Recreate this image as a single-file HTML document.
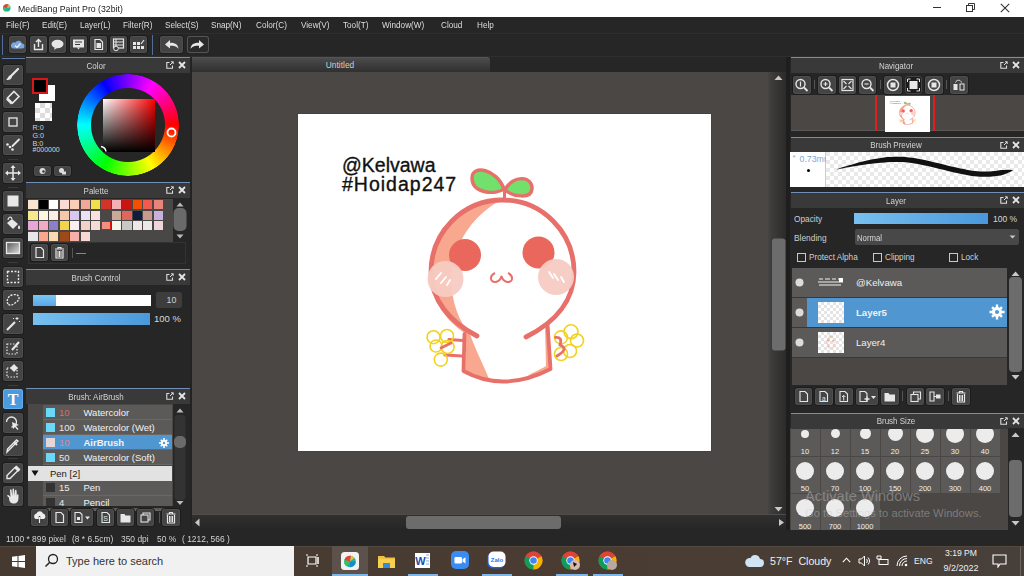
<!DOCTYPE html><html><head><meta charset="utf-8"><style>
html,body{margin:0;padding:0;}
body{width:1024px;height:576px;overflow:hidden;position:relative;background:#262626;font-family:"Liberation Sans",sans-serif;}
div,svg{box-sizing:border-box;}
.t{position:absolute;white-space:nowrap;line-height:1.15;}
.btn{position:absolute;background:#444;border-radius:3px;box-shadow:inset 0 0 0 1px #4e4e4e,0 0 0 1px #1c1c1c;}
.hdr{position:absolute;background:#393939;border-top:1px solid #6d8fbd;}
</style></head><body>
<div style="position:absolute;left:0px;top:0px;width:1024px;height:17px;background:#fff"></div>
<svg style="position:absolute;left:2px;top:3px;" width="10" height="10" viewBox="0 0 10 10"><circle cx="4.8" cy="4.9" r="3.7" fill="#1fb29a"/><path d="M4.8 4.9 L1.1 4.4 A3.7 3.7 0 0 1 6.5 1.6Z" fill="#e84040"/><path d="M4.8 4.9 L6.5 1.6 A3.7 3.7 0 0 1 8.4 4.2Z" fill="#f2b030"/><path d="M4.8 4.9 L1.1 4.4 A3.7 3.7 0 0 0 3.5 8.4Z" fill="#36c060"/></svg>
<div class="t" style="left:17.5px;top:2.8px;font-size:9.6px;line-height:11.5px;color:#1a1a1a;transform:scaleX(0.91);transform-origin:left;">MediBang Paint Pro (32bit)</div>
<div style="position:absolute;left:933px;top:7px;width:8px;height:1px;background:#333"></div>
<svg style="position:absolute;left:966px;top:3px;" width="10" height="10" viewBox="0 0 10 10"><rect x="0.5" y="2.5" width="6" height="6" fill="none" stroke="#333" stroke-width="1"/><path d="M2.5 2.5V0.5H8.5V6.5H6.5" fill="none" stroke="#333" stroke-width="1"/></svg>
<svg style="position:absolute;left:1000px;top:3px;" width="10" height="10" viewBox="0 0 10 10"><path d="M.8 .8L9.2 9.2M9.2 .8L.8 9.2" stroke="#333" stroke-width="1.1"/></svg>
<div style="position:absolute;left:0px;top:17px;width:1024px;height:16px;background:#262626"></div>
<div class="t" style="left:6px;top:20.2px;font-size:8.9px;line-height:10.7px;color:#dedede;transform:scaleX(0.92);transform-origin:left;">File(F)</div>
<div class="t" style="left:42px;top:20.2px;font-size:8.9px;line-height:10.7px;color:#dedede;transform:scaleX(0.92);transform-origin:left;">Edit(E)</div>
<div class="t" style="left:80px;top:20.2px;font-size:8.9px;line-height:10.7px;color:#dedede;transform:scaleX(0.92);transform-origin:left;">Layer(L)</div>
<div class="t" style="left:123px;top:20.2px;font-size:8.9px;line-height:10.7px;color:#dedede;transform:scaleX(0.92);transform-origin:left;">Filter(R)</div>
<div class="t" style="left:165px;top:20.2px;font-size:8.9px;line-height:10.7px;color:#dedede;transform:scaleX(0.92);transform-origin:left;">Select(S)</div>
<div class="t" style="left:211px;top:20.2px;font-size:8.9px;line-height:10.7px;color:#dedede;transform:scaleX(0.92);transform-origin:left;">Snap(N)</div>
<div class="t" style="left:256px;top:20.2px;font-size:8.9px;line-height:10.7px;color:#dedede;transform:scaleX(0.92);transform-origin:left;">Color(C)</div>
<div class="t" style="left:301px;top:20.2px;font-size:8.9px;line-height:10.7px;color:#dedede;transform:scaleX(0.92);transform-origin:left;">View(V)</div>
<div class="t" style="left:343px;top:20.2px;font-size:8.9px;line-height:10.7px;color:#dedede;transform:scaleX(0.92);transform-origin:left;">Tool(T)</div>
<div class="t" style="left:382px;top:20.2px;font-size:8.9px;line-height:10.7px;color:#dedede;transform:scaleX(0.92);transform-origin:left;">Window(W)</div>
<div class="t" style="left:441px;top:20.2px;font-size:8.9px;line-height:10.7px;color:#dedede;transform:scaleX(0.92);transform-origin:left;">Cloud</div>
<div class="t" style="left:477px;top:20.2px;font-size:8.9px;line-height:10.7px;color:#dedede;transform:scaleX(0.92);transform-origin:left;">Help</div>
<div style="position:absolute;left:0px;top:33px;width:1024px;height:24px;background:#262626;border-top:1px solid #2e2e2e;border-bottom:1px solid #2e2e2e"></div>
<div style="position:absolute;left:2px;top:35px;width:1px;height:20px;background:#4f6f9a"></div>
<div class="btn" style="left:9px;top:36px;width:17px;height:17px;"></div>
<div class="btn" style="left:30px;top:36px;width:17px;height:17px;"></div>
<div class="btn" style="left:49px;top:36px;width:17px;height:17px;"></div>
<div class="btn" style="left:70px;top:36px;width:17px;height:17px;"></div>
<div class="btn" style="left:90px;top:36px;width:17px;height:17px;"></div>
<div class="btn" style="left:110px;top:36px;width:17px;height:17px;"></div>
<div class="btn" style="left:130px;top:36px;width:17px;height:17px;"></div>
<div style="position:absolute;left:152px;top:35px;width:1px;height:20px;background:#4f6f9a"></div>
<div class="btn" style="left:160px;top:36px;width:23px;height:17px;"></div>
<div class="btn" style="left:187px;top:36px;width:22px;height:17px;background:#2a2a2a;box-shadow:inset 0 0 0 1px #555"></div>
<svg style="position:absolute;left:9px;top:36px;" width="17" height="17" viewBox="0 0 17 17"><path d="M4 12.5h9a2.5 2.5 0 0 0 0-5 3.5 3.5 0 0 0-6.5-1A2.8 2.8 0 0 0 4 12.5z" fill="#7ba6dc"/><path d="M6 9.5l2 2 3.5-4" stroke="#e8eef8" stroke-width="1.3" fill="none"/></svg>
<svg style="position:absolute;left:30px;top:36px;" width="17" height="17" viewBox="0 0 17 17"><path d="M4.5 8v5.5h8V8" stroke="#e6e6e6" stroke-width="1.4" fill="none"/><path d="M8.5 11V3.5M6 6l2.5-2.5L11 6" stroke="#e6e6e6" stroke-width="1.4" fill="none"/></svg>
<svg style="position:absolute;left:49px;top:36px;" width="17" height="17" viewBox="0 0 17 17"><ellipse cx="8.5" cy="8" rx="6" ry="4.2" fill="#e6e6e6"/><path d="M6 11l-1 3 3-2z" fill="#e6e6e6"/></svg>
<svg style="position:absolute;left:70px;top:36px;" width="17" height="17" viewBox="0 0 17 17"><rect x="3" y="3.5" width="11" height="8" fill="#e6e6e6"/><path d="M7 11.5l1.5 2 1.5-2z" fill="#e6e6e6"/><path d="M5 6h7M5 8.5h5" stroke="#3b3b3b" stroke-width="1"/></svg>
<svg style="position:absolute;left:90px;top:36px;" width="17" height="17" viewBox="0 0 17 17"><path d="M5 3.5h5l2.5 2.5v7.5H5z" fill="none" stroke="#e6e6e6" stroke-width="1.2"/><rect x="6.5" y="7" width="4.5" height="5" fill="#e6e6e6"/></svg>
<svg style="position:absolute;left:110px;top:36px;" width="17" height="17" viewBox="0 0 17 17"><rect x="3.5" y="3" width="10" height="9" fill="none" stroke="#e6e6e6" stroke-width="1.2"/><path d="M3.5 6h10M3.5 9h10M6 3v9" stroke="#e6e6e6" stroke-width="1"/><circle cx="6" cy="12.5" r="2.3" fill="#3b3b3b" stroke="#e6e6e6" stroke-width="1"/></svg>
<svg style="position:absolute;left:130px;top:36px;" width="17" height="17" viewBox="0 0 17 17"><path d="M3 6h3v3H3zM7 6h3v3H7zM3 10h3v3H3zM7 10h3v3H7zM11 10h3v3h-3z" fill="#e6e6e6"/><path d="M11 8l3-4" stroke="#e6e6e6" stroke-width="1.2"/></svg>
<svg style="position:absolute;left:160px;top:36px;" width="23" height="17" viewBox="0 0 23 17"><path d="M5 8.5l5-4.5v2.8c5 0 8 1.5 8.5 6-2-2.5-4.5-3-8.5-3v2.8z" fill="#e6e6e6"/></svg>
<svg style="position:absolute;left:187px;top:36px;" width="22" height="17" viewBox="0 0 22 17"><path d="M17 8.5l-5-4.5v2.8c-5 0-8 1.5-8.5 6 2-2.5 4.5-3 8.5-3v2.8z" fill="#e6e6e6"/></svg>
<div style="position:absolute;left:0px;top:57px;width:25px;height:474px;background:#262626"></div>
<div style="position:absolute;left:2px;top:58px;width:23px;height:1px;background:#5f7fa8"></div>
<div style="position:absolute;left:8px;top:158.5px;width:10px;height:1px;background:#3c3c3c"></div>
<div style="position:absolute;left:8px;top:186.5px;width:10px;height:1px;background:#3c3c3c"></div>
<div style="position:absolute;left:8px;top:262px;width:10px;height:1px;background:#3c3c3c"></div>
<div style="position:absolute;left:8px;top:384.5px;width:10px;height:1px;background:#3c3c3c"></div>
<div style="position:absolute;left:8px;top:458px;width:10px;height:1px;background:#3c3c3c"></div>
<div class="btn" style="left:3px;top:65px;width:20px;height:20px;"></div>
<div class="btn" style="left:3px;top:88px;width:20px;height:20px;"></div>
<div class="btn" style="left:3px;top:112px;width:20px;height:20px;"></div>
<div class="btn" style="left:3px;top:135px;width:20px;height:20px;"></div>
<div class="btn" style="left:3px;top:163px;width:20px;height:20px;"></div>
<div class="btn" style="left:3px;top:190.5px;width:20px;height:20px;"></div>
<div class="btn" style="left:3px;top:214px;width:20px;height:20px;"></div>
<div class="btn" style="left:3px;top:238px;width:20px;height:20px;"></div>
<div class="btn" style="left:3px;top:266.5px;width:20px;height:20px;"></div>
<div class="btn" style="left:3px;top:290px;width:20px;height:20px;"></div>
<div class="btn" style="left:3px;top:314px;width:20px;height:20px;"></div>
<div class="btn" style="left:3px;top:338px;width:20px;height:20px;"></div>
<div class="btn" style="left:3px;top:361px;width:20px;height:20px;"></div>
<div class="btn" style="left:3px;top:389px;width:20px;height:20px;background:#4a9ae0;box-shadow:inset 0 0 0 1px #63aef0"></div>
<div class="btn" style="left:3px;top:412.5px;width:20px;height:20px;"></div>
<div class="btn" style="left:3px;top:436px;width:20px;height:20px;"></div>
<div class="btn" style="left:3px;top:462.5px;width:20px;height:20px;"></div>
<div class="btn" style="left:3px;top:486px;width:20px;height:20px;"></div>
<svg style="position:absolute;left:3px;top:65px;" width="20" height="20" viewBox="0 0 20 20"><path d="M15 4L8 11" stroke="#e8e8e8" stroke-width="2.2" stroke-linecap="round"/><path d="M5 12.5c1-2 2.5-2.5 3.5-1.5s0 2.5-1.5 3.5c-1 .5-3 .5-4 .5 1-.5 1-1.5 2-2.5z" fill="#e8e8e8"/></svg>
<svg style="position:absolute;left:3px;top:88px;" width="20" height="20" viewBox="0 0 20 20"><path d="M11 3.5l5 5-6.5 6.5-5-5z" fill="none" stroke="#e8e8e8" stroke-width="1.6"/><path d="M4.5 10l5 5-1.5 1.5-5-5z" fill="#e8e8e8"/></svg>
<svg style="position:absolute;left:3px;top:112px;" width="20" height="20" viewBox="0 0 20 20"><rect x="6" y="6" width="8" height="8" fill="none" stroke="#e8e8e8" stroke-width="1.3"/></svg>
<svg style="position:absolute;left:3px;top:135px;" width="20" height="20" viewBox="0 0 20 20"><path d="M16 4.5L9.5 11" stroke="#e8e8e8" stroke-width="1.8" stroke-linecap="round"/><circle cx="4.5" cy="9.5" r="1.3" fill="#e8e8e8"/><circle cx="7" cy="12" r="1.3" fill="#e8e8e8"/><circle cx="9.5" cy="14.5" r="1.3" fill="#e8e8e8"/></svg>
<svg style="position:absolute;left:3px;top:163px;" width="20" height="20" viewBox="0 0 20 20"><path d="M10 3v14M3 10h14" stroke="#e8e8e8" stroke-width="1.5"/><path d="M10 2l-2.5 3h5zM10 18l-2.5-3h5zM2 10l3-2.5v5zM18 10l-3-2.5v5z" fill="#e8e8e8"/></svg>
<svg style="position:absolute;left:3px;top:190.5px;" width="20" height="20" viewBox="0 0 20 20"><rect x="4.5" y="4.5" width="11" height="11" fill="#e8e8e8"/></svg>
<svg style="position:absolute;left:3px;top:214px;" width="20" height="20" viewBox="0 0 20 20"><path d="M4 9l5-4 6 5-5 5z" fill="#e8e8e8"/><path d="M9 5c-1-3-4-2-4 1" stroke="#e8e8e8" stroke-width="1.2" fill="none"/><path d="M16 11c1.5 2 1.5 4 0 4s-1.5-2 0-4z" fill="#e8e8e8"/></svg>
<svg style="position:absolute;left:3px;top:238px;" width="20" height="20" viewBox="0 0 20 20"><defs><linearGradient id="gg" x1="0" y1="0" x2="1" y2="1"><stop offset="0" stop-color="#555"/><stop offset="1" stop-color="#ddd"/></linearGradient></defs><rect x="3.5" y="4.5" width="13" height="11" fill="url(#gg)" stroke="#e8e8e8" stroke-width="1.3"/></svg>
<svg style="position:absolute;left:3px;top:266.5px;" width="20" height="20" viewBox="0 0 20 20"><rect x="4.5" y="4.5" width="11" height="11" fill="none" stroke="#e8e8e8" stroke-width="1.4" stroke-dasharray="2 1.5"/></svg>
<svg style="position:absolute;left:3px;top:290px;" width="20" height="20" viewBox="0 0 20 20"><path d="M5 14c-2-3 0-8 4-9s7 0 7 3-2 3-4 5-5 3-7 1z" fill="none" stroke="#e8e8e8" stroke-width="1.3" stroke-dasharray="2 1.2"/></svg>
<svg style="position:absolute;left:3px;top:314px;" width="20" height="20" viewBox="0 0 20 20"><path d="M4 16L12 8" stroke="#e8e8e8" stroke-width="2.2"/><path d="M14 3v3M12.5 4.5h3M16 7l1 1M11 5l-1-1" stroke="#e8e8e8" stroke-width="1"/></svg>
<svg style="position:absolute;left:3px;top:338px;" width="20" height="20" viewBox="0 0 20 20"><rect x="4" y="6" width="10" height="10" fill="none" stroke="#e8e8e8" stroke-width="1.2" stroke-dasharray="1.5 1.5"/><path d="M9 12l7-8" stroke="#e8e8e8" stroke-width="2"/></svg>
<svg style="position:absolute;left:3px;top:361px;" width="20" height="20" viewBox="0 0 20 20"><rect x="4" y="7" width="10" height="9" fill="none" stroke="#e8e8e8" stroke-width="1.2" stroke-dasharray="1.5 1.5"/><path d="M11 3l4 4-4 4-4-4z" fill="#e8e8e8"/></svg>
<svg style="position:absolute;left:3px;top:389px;" width="20" height="20" viewBox="0 0 20 20"><text x="10" y="16" font-family="Liberation Serif" font-weight="bold" font-size="16" fill="#fff" text-anchor="middle">T</text></svg>
<svg style="position:absolute;left:3px;top:412.5px;" width="20" height="20" viewBox="0 0 20 20"><path d="M3.5 9a5 5 0 1 1 5 5" fill="none" stroke="#e8e8e8" stroke-width="1.3"/><path d="M9 9l7 3-3 1 2.5 3-1 1-2.5-3-2 2z" fill="#e8e8e8"/></svg>
<svg style="position:absolute;left:3px;top:436px;" width="20" height="20" viewBox="0 0 20 20"><path d="M15 5l-9 9-2 2 .5-3L13.5 4z" fill="none" stroke="#e8e8e8" stroke-width="1.4"/><path d="M11 6l3 3" stroke="#e8e8e8" stroke-width="2"/></svg>
<svg style="position:absolute;left:3px;top:462.5px;" width="20" height="20" viewBox="0 0 20 20"><path d="M13.5 3.5l3 3-2 1.5-7.5 7.5H4v-3l7.5-7.5z" fill="none" stroke="#e8e8e8" stroke-width="1.4"/><path d="M12 4l4 4" stroke="#e8e8e8" stroke-width="2.5"/></svg>
<svg style="position:absolute;left:3px;top:486px;" width="20" height="20" viewBox="0 0 20 20"><g fill="#e8e8e8"><path d="M6 11.5 C6 16 8 17.5 11 17.5 C14 17.5 15.5 15.5 15.5 12 L15.5 9 C15.5 8 14 8 14 9 L14 11 L13.5 4.5 C13.5 3.5 12 3.5 12 4.5 L12 10 L11 3.2 C11 2.2 9.5 2.2 9.5 3.2 L9.5 10 L8.5 4 C8.5 3 7 3 7 4 L7.5 11 C7 10 5.5 8.5 4.5 9 C3.5 9.5 5 11 6 11.5Z"/></g></svg>
<div style="position:absolute;left:25px;top:57px;width:167px;height:474px;background:#262626"></div>
<div style="position:absolute;left:190px;top:57px;width:2px;height:474px;background:#232323"></div>
<div style="position:absolute;left:26px;top:57px;width:164px;height:1px;background:#6f8fb8"></div>
<div style="position:absolute;left:26px;top:58px;width:164px;height:15px;background:#393939"></div>
<div class="t" style="left:-104.0px;width:400px;text-align:center;top:60.8px;font-size:8.6px;line-height:10.3px;color:#d4d4d4;transform:scaleX(0.93);transform-origin:center;">Color</div>
<svg style="position:absolute;left:166px;top:61px;" width="8" height="8" viewBox="0 0 8 8"><path d="M5 .8H7.2V3M7.2 .8L4 4" stroke="#ddd" stroke-width="1" fill="none"/><path d="M3.5 1.5H.8V7.2H6.5V4.5" stroke="#ddd" stroke-width="1.1" fill="none"/></svg>
<svg style="position:absolute;left:178px;top:61px;" width="8" height="8" viewBox="0 0 8 8"><path d="M1 1L7 7M7 1L1 7" stroke="#e6e6e6" stroke-width="1.8"/></svg>
<div style="position:absolute;left:39px;top:85px;width:16px;height:16px;background:#fff"></div>
<div style="position:absolute;left:32px;top:78px;width:16px;height:16px;background:#000;border:2px solid #d81818"></div>
<div style="position:absolute;left:35px;top:103px;width:17px;height:18px;background-color:#fff;background-image:linear-gradient(45deg,#ddd 25%,transparent 25%,transparent 75%,#ddd 75%),linear-gradient(45deg,#ddd 25%,transparent 25%,transparent 75%,#ddd 75%);background-size:10px 10px;background-position:0 0,5px 5px"></div>
<div class="t" style="left:32.5px;top:124.2px;font-size:7.2px;line-height:8.6px;color:#d0d0d0;">R:0</div>
<div class="t" style="left:32.5px;top:132.0px;font-size:7.2px;line-height:8.6px;color:#d0d0d0;">G:0</div>
<div style="position:absolute;left:32px;top:140px;width:20px;height:6.5px;overflow:hidden"><div class="t" style="left:0.5px;top:-0.3px;font-size:7.2px;line-height:8.6px;color:#d0d0d0">B:0</div></div>
<div class="t" style="left:32.5px;top:146.1px;font-size:7px;line-height:8.4px;color:#d8d8d8;background:transparent">#000000</div>
<div class="btn" style="left:34px;top:166px;width:17px;height:10px;"></div>
<div class="btn" style="left:54px;top:166px;width:17px;height:10px;"></div>
<svg style="position:absolute;left:34px;top:166px;" width="17" height="10" viewBox="0 0 17 10"><circle cx="8.5" cy="5" r="3" fill="#ddd"/><circle cx="9.5" cy="5.5" r="1.3" fill="#3b3b3b"/></svg>
<svg style="position:absolute;left:54px;top:166px;" width="17" height="10" viewBox="0 0 17 10"><circle cx="7.5" cy="4.5" r="2.5" fill="#ddd"/><rect x="8" y="5.5" width="4" height="3" fill="#ddd"/></svg>
<div style="position:absolute;left:77px;top:74px;width:102px;height:102px;border-radius:50%;background:conic-gradient(from 90deg,#f00,#ff0,#0f0,#0ff,#00f,#f0f,#f00);-webkit-mask:radial-gradient(circle,transparent 36.5px,#000 37.5px,#000 50.5px,transparent 51.5px);mask:radial-gradient(circle,transparent 36.5px,#000 37.5px,#000 50.5px,transparent 51.5px)"></div>
<div style="position:absolute;left:103px;top:99px;width:52px;height:53px;background:linear-gradient(to bottom,rgba(0,0,0,0),#000),linear-gradient(to right,#fff,#f00)"></div>
<svg style="position:absolute;left:165px;top:126px;" width="13" height="13" viewBox="0 0 13 13"><circle cx="6.5" cy="6.5" r="4" fill="none" stroke="#fff" stroke-width="1.8"/></svg>
<svg style="position:absolute;left:99px;top:144px;" width="10" height="10" viewBox="0 0 10 10"><path d="M2 2.5A6 6 0 0 1 7 7.5" stroke="#fff" stroke-width="1.5" fill="none"/></svg>
<div style="position:absolute;left:26px;top:182px;width:164px;height:1px;background:#6f8fb8"></div>
<div style="position:absolute;left:26px;top:183px;width:164px;height:15px;background:#393939"></div>
<div class="t" style="left:-104.0px;width:400px;text-align:center;top:185.8px;font-size:8.6px;line-height:10.3px;color:#d4d4d4;transform:scaleX(0.93);transform-origin:center;">Palette</div>
<svg style="position:absolute;left:166px;top:186px;" width="8" height="8" viewBox="0 0 8 8"><path d="M5 .8H7.2V3M7.2 .8L4 4" stroke="#ddd" stroke-width="1" fill="none"/><path d="M3.5 1.5H.8V7.2H6.5V4.5" stroke="#ddd" stroke-width="1.1" fill="none"/></svg>
<svg style="position:absolute;left:178px;top:186px;" width="8" height="8" viewBox="0 0 8 8"><path d="M1 1L7 7M7 1L1 7" stroke="#e6e6e6" stroke-width="1.8"/></svg>
<div style="position:absolute;left:28px;top:199px;width:145px;height:43px;background:#4a4846"></div>
<div style="position:absolute;left:28.3px;top:200.0px;width:9.3px;height:9.3px;background:#f9e4cf;"></div>
<div style="position:absolute;left:38.8px;top:200.0px;width:9.3px;height:9.3px;background:#000000;"></div>
<div style="position:absolute;left:49.2px;top:200.0px;width:9.3px;height:9.3px;background:#ffffff;"></div>
<div style="position:absolute;left:59.6px;top:200.0px;width:9.3px;height:9.3px;background:#fbdcd2;"></div>
<div style="position:absolute;left:70.1px;top:200.0px;width:9.3px;height:9.3px;background:#f9cfb8;"></div>
<div style="position:absolute;left:80.5px;top:200.0px;width:9.3px;height:9.3px;background:#f2a898;"></div>
<div style="position:absolute;left:91.0px;top:200.0px;width:9.3px;height:9.3px;background:#f2e04a;"></div>
<div style="position:absolute;left:101.4px;top:200.0px;width:9.3px;height:9.3px;background:#d0342b;"></div>
<div style="position:absolute;left:111.9px;top:200.0px;width:9.3px;height:9.3px;background:#f4b0b3;"></div>
<div style="position:absolute;left:122.3px;top:200.0px;width:9.3px;height:9.3px;background:#c8150f;"></div>
<div style="position:absolute;left:132.8px;top:200.0px;width:9.3px;height:9.3px;background:#f64f00;"></div>
<div style="position:absolute;left:143.2px;top:200.0px;width:9.3px;height:9.3px;background:#f25a4f;"></div>
<div style="position:absolute;left:153.7px;top:200.0px;width:9.3px;height:9.3px;background:#e8847a;"></div>
<div style="position:absolute;left:28.3px;top:210.5px;width:9.3px;height:9.3px;background:#f6ea8c;"></div>
<div style="position:absolute;left:38.8px;top:210.5px;width:9.3px;height:9.3px;background:#fdf6e3;"></div>
<div style="position:absolute;left:49.2px;top:210.5px;width:9.3px;height:9.3px;background:#fbeee5;"></div>
<div style="position:absolute;left:59.6px;top:210.5px;width:9.3px;height:9.3px;background:#f5c9a8;"></div>
<div style="position:absolute;left:70.1px;top:210.5px;width:9.3px;height:9.3px;background:#d6c8f0;"></div>
<div style="position:absolute;left:80.5px;top:210.5px;width:9.3px;height:9.3px;background:#e8e4f4;"></div>
<div style="position:absolute;left:91.0px;top:210.5px;width:9.3px;height:9.3px;background:#f7e2de;"></div>
<div style="position:absolute;left:101.4px;top:210.5px;width:9.3px;height:9.3px;background:#4b4746;"></div>
<div style="position:absolute;left:111.9px;top:210.5px;width:9.3px;height:9.3px;background:#c8a99a;"></div>
<div style="position:absolute;left:122.3px;top:210.5px;width:9.3px;height:9.3px;background:#e0665a;"></div>
<div style="position:absolute;left:132.8px;top:210.5px;width:9.3px;height:9.3px;background:#0f1c3d;"></div>
<div style="position:absolute;left:143.2px;top:210.5px;width:9.3px;height:9.3px;background:#c89a8e;"></div>
<div style="position:absolute;left:153.7px;top:210.5px;width:9.3px;height:9.3px;background:#c8b0dc;"></div>
<div style="position:absolute;left:28.3px;top:221.0px;width:9.3px;height:9.3px;background:#e8a6d8;"></div>
<div style="position:absolute;left:38.8px;top:221.0px;width:9.3px;height:9.3px;background:#f4a9c4;"></div>
<div style="position:absolute;left:49.2px;top:221.0px;width:9.3px;height:9.3px;background:#8b80cc;"></div>
<div style="position:absolute;left:59.6px;top:221.0px;width:9.3px;height:9.3px;background:#f5d34a;"></div>
<div style="position:absolute;left:70.1px;top:221.0px;width:9.3px;height:9.3px;background:#f9f1f1;"></div>
<div style="position:absolute;left:80.5px;top:221.0px;width:9.3px;height:9.3px;background:#f4d3c7;"></div>
<div style="position:absolute;left:91.0px;top:221.0px;width:9.3px;height:9.3px;background:#f6dcd7;"></div>
<div style="position:absolute;left:101.4px;top:221.0px;width:9.3px;height:9.3px;background:#f29080;border:1.5px solid #e01010;"></div>
<div style="position:absolute;left:111.9px;top:221.0px;width:9.3px;height:9.3px;background:#f6f5ea;"></div>
<div style="position:absolute;left:122.3px;top:221.0px;width:9.3px;height:9.3px;background:#c8c8c8;"></div>
<div style="position:absolute;left:132.8px;top:221.0px;width:9.3px;height:9.3px;background:#efe6ea;"></div>
<div style="position:absolute;left:143.2px;top:221.0px;width:9.3px;height:9.3px;background:#e9e9e6;"></div>
<div style="position:absolute;left:153.7px;top:221.0px;width:9.3px;height:9.3px;background:#ecd6d9;"></div>
<div style="position:absolute;left:28.3px;top:231.5px;width:9.3px;height:9.3px;background:#e7e7e7;"></div>
<div style="position:absolute;left:38.8px;top:231.5px;width:9.3px;height:9.3px;background:#f9a68c;"></div>
<div style="position:absolute;left:49.2px;top:231.5px;width:9.3px;height:9.3px;background:#f8d9b1;"></div>
<div style="position:absolute;left:59.6px;top:231.5px;width:9.3px;height:9.3px;background:#a04918;"></div>
<div style="position:absolute;left:70.1px;top:231.5px;width:9.3px;height:9.3px;background:#f4b0a8;"></div>
<div style="position:absolute;left:80.5px;top:231.5px;width:9.3px;height:9.3px;background:#f8d9d4;"></div>
<div style="position:absolute;left:173px;top:199px;width:14px;height:43px;background:#262626"></div>
<svg style="position:absolute;left:173px;top:199px;" width="14" height="43" viewBox="0 0 14 43"><path d="M3.5 7.5L7 3.5l3.5 4z" fill="#bbb"/><rect x="0.5" y="9" width="13" height="23" rx="5" fill="#6a6a6a"/><path d="M3.5 35.5L7 39.5l3.5-4z" fill="#bbb"/></svg>
<div style="position:absolute;left:28px;top:242px;width:158px;height:22px;background:#262626;border:1px solid #333"></div>
<div class="btn" style="left:31px;top:244px;width:17px;height:17px;"></div>
<div class="btn" style="left:51px;top:244px;width:17px;height:17px;"></div>
<svg style="position:absolute;left:31px;top:244px;" width="17" height="17" viewBox="0 0 17 17"><path d="M5 3.5h5l2.5 2.5v7.5H5z" fill="none" stroke="#e6e6e6" stroke-width="1.2"/></svg>
<svg style="position:absolute;left:51px;top:244px;" width="17" height="17" viewBox="0 0 17 17"><path d="M4 5h9M7 5V3.5h3V5M5 6v8h7V6" fill="none" stroke="#e6e6e6" stroke-width="1.2"/><path d="M7 7v6M8.5 7v6M10 7v6" stroke="#e6e6e6" stroke-width="1"/></svg>
<div style="position:absolute;left:72px;top:248px;width:1px;height:10px;background:#555"></div>
<div style="position:absolute;left:76px;top:253px;width:10px;height:1px;background:#888"></div>
<div style="position:absolute;left:26px;top:269px;width:164px;height:1px;background:#6f8fb8"></div>
<div style="position:absolute;left:26px;top:270px;width:164px;height:15px;background:#393939"></div>
<div class="t" style="left:-104.0px;width:400px;text-align:center;top:272.8px;font-size:8.6px;line-height:10.3px;color:#d4d4d4;transform:scaleX(0.93);transform-origin:center;">Brush Control</div>
<svg style="position:absolute;left:166px;top:273px;" width="8" height="8" viewBox="0 0 8 8"><path d="M5 .8H7.2V3M7.2 .8L4 4" stroke="#ddd" stroke-width="1" fill="none"/><path d="M3.5 1.5H.8V7.2H6.5V4.5" stroke="#ddd" stroke-width="1.1" fill="none"/></svg>
<svg style="position:absolute;left:178px;top:273px;" width="8" height="8" viewBox="0 0 8 8"><path d="M1 1L7 7M7 1L1 7" stroke="#e6e6e6" stroke-width="1.8"/></svg>
<div style="position:absolute;left:33px;top:294.5px;width:118px;height:11.5px;background:#fff"></div>
<div style="position:absolute;left:33px;top:294.5px;width:23px;height:11.5px;background:linear-gradient(#7cc4f4,#58a8e8)"></div>
<div style="position:absolute;left:156px;top:292px;width:26px;height:16px;background:#3d3d3d;border-radius:2px"></div>
<div class="t" style="left:166.5px;top:294.7px;font-size:8.8px;line-height:10.6px;color:#d0d0d0;">10</div>
<div style="position:absolute;left:33px;top:313px;width:117px;height:11.5px;background:linear-gradient(to right,#78c0f0,#4a98dc)"></div>
<div class="t" style="left:154px;top:313.1px;font-size:9.5px;line-height:11.4px;color:#d8d8d8;">100 %</div>
<div style="position:absolute;left:26px;top:388px;width:164px;height:1px;background:#6f8fb8"></div>
<div style="position:absolute;left:26px;top:389px;width:164px;height:15px;background:#393939"></div>
<div class="t" style="left:-104.0px;width:400px;text-align:center;top:391.8px;font-size:8.6px;line-height:10.3px;color:#d4d4d4;transform:scaleX(0.93);transform-origin:center;">Brush: AirBrush</div>
<svg style="position:absolute;left:166px;top:392px;" width="8" height="8" viewBox="0 0 8 8"><path d="M5 .8H7.2V3M7.2 .8L4 4" stroke="#ddd" stroke-width="1" fill="none"/><path d="M3.5 1.5H.8V7.2H6.5V4.5" stroke="#ddd" stroke-width="1.1" fill="none"/></svg>
<svg style="position:absolute;left:178px;top:392px;" width="8" height="8" viewBox="0 0 8 8"><path d="M1 1L7 7M7 1L1 7" stroke="#e6e6e6" stroke-width="1.8"/></svg>
<div style="position:absolute;left:28px;top:404px;width:145px;height:102px;background:#4a4846"></div>
<div style="position:absolute;left:43px;top:405px;width:129px;height:15px;background:#5c5a58;border-bottom:1px solid #6a6866"></div>
<div style="position:absolute;left:46px;top:407.8px;width:9px;height:9px;background:#6ad8f8"></div>
<div class="t" style="left:59px;top:406.8px;font-size:9.5px;line-height:11.4px;color:#d86a6a;">10</div>
<div class="t" style="left:83.5px;top:406.8px;font-size:9.5px;line-height:11.4px;color:#f2f2f2;">Watercolor</div>
<div style="position:absolute;left:43px;top:420px;width:129px;height:15px;background:#5c5a58;border-bottom:1px solid #6a6866"></div>
<div style="position:absolute;left:46px;top:422.8px;width:9px;height:9px;background:#6ad8f8"></div>
<div class="t" style="left:59px;top:421.8px;font-size:9.5px;line-height:11.4px;color:#e8e8e8;">100</div>
<div class="t" style="left:83.5px;top:421.8px;font-size:9.5px;line-height:11.4px;color:#f2f2f2;">Watercolor (Wet)</div>
<div style="position:absolute;left:43px;top:435px;width:129px;height:15px;background:#5097d2;border-bottom:1px solid #6a6866"></div>
<div style="position:absolute;left:46px;top:437.8px;width:9px;height:9px;background:#e6d6d6"></div>
<div class="t" style="left:59px;top:436.8px;font-size:9.5px;line-height:11.4px;color:#e88080;">10</div>
<div class="t" style="left:83.5px;top:436.8px;font-size:9.5px;line-height:11.4px;color:#f2f2f2;font-weight:bold">AirBrush</div>
<svg style="position:absolute;left:159px;top:437.5px;" width="10" height="10" viewBox="0 0 10 10"><g fill="#fff"><circle cx="5" cy="5" r="3"/><path d="M4.2 0h1.6v10H4.2zM0 4.2h10v1.6H0z"/><path d="M1.2 2.3l1.1-1.1 6.5 6.5-1.1 1.1zM7.7 1.2l1.1 1.1-6.5 6.5-1.1-1.1z"/></g><circle cx="5" cy="5" r="1.2" fill="#5097d2"/></svg>
<div style="position:absolute;left:43px;top:450px;width:129px;height:15px;background:#5c5a58;border-bottom:1px solid #6a6866"></div>
<div style="position:absolute;left:46px;top:452.8px;width:9px;height:9px;background:#6ad8f8"></div>
<div class="t" style="left:59px;top:451.8px;font-size:9.5px;line-height:11.4px;color:#e8e8e8;">50</div>
<div class="t" style="left:83.5px;top:451.8px;font-size:9.5px;line-height:11.4px;color:#f2f2f2;">Watercolor (Soft)</div>
<div style="position:absolute;left:28px;top:465.5px;width:144px;height:15px;background:#e2e2e2"></div>
<svg style="position:absolute;left:31px;top:469px;" width="8" height="8" viewBox="0 0 8 8"><path d="M.5 1.5h7L4 7z" fill="#111"/></svg>
<div class="t" style="left:50px;top:467.5px;font-size:9.5px;line-height:11.4px;color:#1a1a1a;">Pen [2]</div>
<div style="position:absolute;left:43px;top:480.5px;width:129px;height:15px;background:#5c5a58;border-bottom:1px solid #6a6866"></div>
<div style="position:absolute;left:46px;top:483.3px;width:9px;height:9px;background:#333"></div>
<div class="t" style="left:59px;top:482.3px;font-size:9.5px;line-height:11.4px;color:#e8e8e8;">15</div>
<div class="t" style="left:83.5px;top:482.3px;font-size:9.5px;line-height:11.4px;color:#f2f2f2;">Pen</div>
<div style="position:absolute;left:43px;top:495.5px;width:129px;height:15px;background:#5c5a58;border-bottom:1px solid #6a6866"></div>
<div style="position:absolute;left:46px;top:498.3px;width:9px;height:9px;background:#333"></div>
<div class="t" style="left:59px;top:497.3px;font-size:9.5px;line-height:11.4px;color:#e8e8e8;">4</div>
<div class="t" style="left:83.5px;top:497.3px;font-size:9.5px;line-height:11.4px;color:#f2f2f2;">Pencil</div>
<div style="position:absolute;left:28px;top:506px;width:159px;height:2px;background:#262626"></div>
<div style="position:absolute;left:173px;top:404px;width:14px;height:102px;background:#262626"></div>
<svg style="position:absolute;left:173px;top:404px;" width="14" height="102" viewBox="0 0 14 102"><path d="M3.5 8.5L7 4.5l3.5 4z" fill="#bbb"/><rect x="1.5" y="11" width="11" height="85" rx="3" fill="#333"/><rect x="1" y="32" width="12" height="12" rx="5" fill="#6a6a6a"/><path d="M3.5 97L7 101l3.5-4z" fill="#bbb"/></svg>
<div class="btn" style="left:31px;top:509px;width:17px;height:17px;"></div>
<div class="btn" style="left:51px;top:509px;width:17px;height:17px;"></div>
<div class="btn" style="left:71px;top:509px;width:22px;height:17px;"></div>
<div class="btn" style="left:97px;top:509px;width:17px;height:17px;"></div>
<div class="btn" style="left:117px;top:509px;width:17px;height:17px;"></div>
<div class="btn" style="left:137px;top:509px;width:17px;height:17px;"></div>
<div class="btn" style="left:162px;top:509px;width:18px;height:17px;"></div>
<div style="position:absolute;left:159px;top:512px;width:1px;height:11px;background:#555"></div>
<svg style="position:absolute;left:31px;top:509px;" width="17" height="17" viewBox="0 0 17 17"><path d="M4.5 10a3 3 0 0 1 1-5.5 3.5 3.5 0 0 1 6.5 0 3 3 0 0 1 1 5.5z" fill="#eee"/><path d="M8.5 7v7M6 11.5l2.5 2.5 2.5-2.5" stroke="#3b3b3b" stroke-width="1.5" fill="none"/><path d="M8.5 8v6" stroke="#eee" stroke-width="1.2"/></svg>
<svg style="position:absolute;left:51px;top:509px;" width="17" height="17" viewBox="0 0 17 17"><path d="M5 3.5h5l2.5 2.5v7.5H5z" fill="none" stroke="#e6e6e6" stroke-width="1.2"/></svg>
<svg style="position:absolute;left:71px;top:509px;" width="22" height="17" viewBox="0 0 22 17"><path d="M4 3.5h5l2 2v8H4z" fill="none" stroke="#e6e6e6" stroke-width="1.1"/><rect x="6" y="8" width="3" height="3" fill="#e6e6e6"/><path d="M14 7.5h5l-2.5 3z" fill="#e6e6e6"/></svg>
<svg style="position:absolute;left:97px;top:509px;" width="17" height="17" viewBox="0 0 17 17"><path d="M5 3.5h5l2.5 2.5v7.5H5z" fill="none" stroke="#e6e6e6" stroke-width="1.1"/><text x="8.7" y="12" font-size="7" fill="#e6e6e6" text-anchor="middle" font-family="Liberation Sans">S</text></svg>
<svg style="position:absolute;left:117px;top:509px;" width="17" height="17" viewBox="0 0 17 17"><path d="M3.5 5h4l1 1.5h5v7h-10z" fill="#e6e6e6"/></svg>
<svg style="position:absolute;left:137px;top:509px;" width="17" height="17" viewBox="0 0 17 17"><rect x="4" y="6" width="7" height="7" fill="none" stroke="#e6e6e6" stroke-width="1.1"/><path d="M6 6V4h7v7h-2" fill="none" stroke="#e6e6e6" stroke-width="1.1"/></svg>
<svg style="position:absolute;left:162px;top:509px;" width="18" height="17" viewBox="0 0 18 17"><path d="M4.5 5h9M7.5 5V3.5h3V5M5.5 6v8h7V6" fill="none" stroke="#e6e6e6" stroke-width="1.2"/><path d="M7.5 7v6M9 7v6M10.5 7v6" stroke="#e6e6e6" stroke-width="1"/></svg>
<div style="position:absolute;left:192px;top:57px;width:598px;height:15px;background:#262626"></div>
<div style="position:absolute;left:192px;top:57px;width:298px;height:15px;background:linear-gradient(#4c4c4c,#3a3a3a 60%,#303030);border-top:1px solid #555;border-radius:0 3px 0 0"></div>
<div class="t" style="left:140px;width:400px;text-align:center;top:59.5px;font-size:8.4px;line-height:10.1px;color:#cfcfcf;">Untitled</div>
<div style="position:absolute;left:192px;top:72px;width:594px;height:459px;background:#4a4745"></div>
<div style="position:absolute;left:298px;top:114px;width:413px;height:337px;background:#fff;box-shadow:0 0 1px #333"></div>
<div style="position:absolute;left:768px;top:72px;width:18px;height:443px;background:linear-gradient(to right,#474543,#3e3c3a 20%,#2c2b2a)"></div>
<svg style="position:absolute;left:771px;top:72px;" width="15" height="443" viewBox="0 0 15 443"><path d="M3.5 8L7.5 3.5 11.5 8z" fill="#c8c8c8"/><rect x="1" y="166.5" width="13.5" height="112" rx="3" fill="#6c6c6c"/><path d="M3.5 435L7.5 439.5 11.5 435z" fill="#c8c8c8"/></svg>
<div style="position:absolute;left:192px;top:514px;width:594px;height:16px;background:linear-gradient(#2f2f2f,#262626);border-top:1px solid #4e4c4a"></div>
<div style="position:absolute;left:406px;top:516px;width:155px;height:13px;background:#6c6c6c;border-radius:3px"></div>
<svg style="position:absolute;left:192px;top:515px;" width="594" height="15" viewBox="0 0 594 15"><path d="M7.5 3.5L3 7.5 7.5 11.5z" fill="#c8c8c8"/><path d="M587 4L592 7.5 587 11z" fill="#c8c8c8"/></svg>
<div style="position:absolute;left:786px;top:57px;width:4px;height:474px;background:#1e1e1e"></div>
<div class="t" style="left:342px;top:156.3px;font-size:19.5px;line-height:18.3px;color:#111;-webkit-text-stroke:0.35px #111">@Kelvawa<br><span style="letter-spacing:1.0px">#Hoidap247</span></div>
<svg style="position:absolute;left:298px;top:114px;" width="413" height="337" viewBox="0 0 413 337">
<g transform="translate(-298,-114)">
<!-- leaves -->
<path d="M504 189 C497 169 472 164 472 178 C472 194 496 195 504 189Z" fill="#72e06c" stroke="#e8706a" stroke-width="3.4"/>
<path d="M505 190 C513 174 533 176 532 189 C531 200 512 196 505 190Z" fill="#72e06c" stroke="#e8706a" stroke-width="3.4"/>
<path d="M504.5 188 V201" stroke="#e8706a" stroke-width="3"/>
<!-- head shading crescent -->
<path d="M502 200 C465 200 431 230 431 275 C431 300 445 320 466 334 L465 374 L490 381 C482 362 474 346 470 334 C458 320 451 300 451.5 278 C453 240 478 211 502 200Z" fill="#f8a88f"/>
<path d="M545 326 L549 326 L551 369 C540 375 530 379 520 381 C532 372 540 370 546 366Z" fill="#f8a88f"/>
<!-- head outline -->
<path d="M477 336 C450 322 431 300 431 272 C431 232 463 200 502.5 200 C542 200 574 232 574 272 C574 300 556 322 526 337" fill="none" stroke="#e8706a" stroke-width="4.8" stroke-linecap="round"/>
<!-- body -->
<path d="M464.5 334 L463.5 371 C478 379 490 381.5 503 381.5 C520 381.5 535 377 550.5 369 L547.5 324" fill="none" stroke="#e8706a" stroke-width="3.8" stroke-linecap="round" stroke-linejoin="round"/>
<!-- cheeks -->
<circle cx="465" cy="255" r="16" fill="#e9675d"/>
<circle cx="538.5" cy="252.5" r="16" fill="#e9675d"/>
<circle cx="445.5" cy="279" r="18" fill="#f7cbc2" opacity="0.95"/>
<circle cx="556" cy="277" r="18" fill="#f7cbc2" opacity="0.95"/>
<path d="M436 279l5-6M441 283l5-6M447 285l3-5" stroke="#fff" stroke-width="1.8" stroke-linecap="round"/>
<path d="M553 278l-4-6M558 280l-4-6M564 282l-3-5" stroke="#fff" stroke-width="1.8" stroke-linecap="round"/>
<!-- mouth -->
<path d="M495 273 C489 276 490 283 496 282 C500 281 501 278 501.5 276 C502 278 503 281 507 282 C513 283 514 276 508 273" fill="none" stroke="#e8706a" stroke-width="2"/>
<!-- arms -->
<path d="M463 340.5 L449 339.5 M462 356 L445 355" stroke="#e8706a" stroke-width="3.2" stroke-linecap="round"/>
<g fill="none" stroke="#f2d21e" stroke-width="1.6">
<circle cx="433.5" cy="337.2" r="6.5"/><circle cx="447" cy="336" r="6.5"/><circle cx="436" cy="346" r="6"/><circle cx="447.6" cy="347" r="6.5"/><circle cx="440.8" cy="359.6" r="6.5"/>
<circle cx="571" cy="331.7" r="7"/><circle cx="577" cy="340.5" r="6.5"/><circle cx="561" cy="337.4" r="6.5"/><circle cx="570" cy="351" r="6.5"/><circle cx="561" cy="354" r="6.5"/>
</g>
<path d="M451 343 L441 348" stroke="#e8706a" stroke-width="2.6" stroke-linecap="round"/>
<path d="M555.5 337.4 C560 337 562 339 560 345 C565 347 567 350 557 356" fill="none" stroke="#e8706a" stroke-width="2.8" stroke-linecap="round"/>
</g></svg>
<div style="position:absolute;left:790px;top:57px;width:234px;height:474px;background:#262626"></div>
<div style="position:absolute;left:791px;top:57px;width:233px;height:1px;background:#6f8fb8"></div>
<div style="position:absolute;left:791px;top:58px;width:233px;height:15px;background:#393939"></div>
<div class="t" style="left:695.5px;width:400px;text-align:center;top:60.8px;font-size:8.6px;line-height:10.3px;color:#d4d4d4;transform:scaleX(0.93);transform-origin:center;">Navigator</div>
<svg style="position:absolute;left:1000px;top:61px;" width="8" height="8" viewBox="0 0 8 8"><path d="M5 .8H7.2V3M7.2 .8L4 4" stroke="#ddd" stroke-width="1" fill="none"/><path d="M3.5 1.5H.8V7.2H6.5V4.5" stroke="#ddd" stroke-width="1.1" fill="none"/></svg>
<svg style="position:absolute;left:1012px;top:61px;" width="8" height="8" viewBox="0 0 8 8"><path d="M1 1L7 7M7 1L1 7" stroke="#e6e6e6" stroke-width="1.8"/></svg>
<div style="position:absolute;left:791px;top:73px;width:233px;height:22px;background:#262626"></div>
<div class="btn" style="left:793px;top:75.5px;width:18px;height:18px;"></div>
<div class="btn" style="left:818px;top:75.5px;width:18px;height:18px;"></div>
<div class="btn" style="left:839px;top:75.5px;width:17px;height:18px;"></div>
<div class="btn" style="left:859px;top:75.5px;width:17px;height:18px;"></div>
<div class="btn" style="left:884px;top:75.5px;width:18px;height:18px;"></div>
<div class="btn" style="left:905px;top:75.5px;width:17px;height:18px;background:#1c1c1c;box-shadow:inset 0 0 0 1px #444"></div>
<div class="btn" style="left:925px;top:75.5px;width:18px;height:18px;"></div>
<div class="btn" style="left:950px;top:75.5px;width:18px;height:18px;"></div>
<div style="position:absolute;left:814px;top:80px;width:1px;height:9px;background:#555"></div>
<div style="position:absolute;left:880px;top:80px;width:1px;height:9px;background:#555"></div>
<div style="position:absolute;left:946px;top:80px;width:1px;height:9px;background:#555"></div>
<svg style="position:absolute;left:793px;top:75.5px;" width="18" height="18" viewBox="0 0 18 18"><circle cx="7.5" cy="8" r="4.5" fill="none" stroke="#e6e6e6" stroke-width="1.4"/><path d="M11 11.5l3.5 3.5" stroke="#e6e6e6" stroke-width="1.8"/><path d="M7.5 5.5v5" stroke="#e6e6e6" stroke-width="1.2"/></svg>
<svg style="position:absolute;left:818px;top:75.5px;" width="18" height="18" viewBox="0 0 18 18"><circle cx="7.5" cy="8" r="4.5" fill="none" stroke="#e6e6e6" stroke-width="1.4"/><path d="M11 11.5l3.5 3.5" stroke="#e6e6e6" stroke-width="1.8"/><path d="M5.5 8h4M7.5 6v4" stroke="#e6e6e6" stroke-width="1.2"/></svg>
<svg style="position:absolute;left:839px;top:75.5px;" width="17" height="18" viewBox="0 0 17 18"><rect x="3" y="3.5" width="11" height="11" fill="none" stroke="#e6e6e6" stroke-width="1.2"/><path d="M4.5 5l3 3M12.5 5l-3 3M4.5 13l3-3M12.5 13l-3-3" stroke="#e6e6e6" stroke-width="1.1"/></svg>
<svg style="position:absolute;left:859px;top:75.5px;" width="17" height="18" viewBox="0 0 17 18"><circle cx="7.5" cy="8" r="4.5" fill="none" stroke="#e6e6e6" stroke-width="1.4"/><path d="M11 11.5l3.5 3.5" stroke="#e6e6e6" stroke-width="1.8"/><path d="M5.5 8h4" stroke="#e6e6e6" stroke-width="1.2"/></svg>
<svg style="position:absolute;left:884px;top:75.5px;" width="18" height="18" viewBox="0 0 18 18"><circle cx="9" cy="9" r="5.5" fill="none" stroke="#e6e6e6" stroke-width="1.5"/><rect x="6.5" y="6.5" width="5" height="5" fill="#e6e6e6"/></svg>
<svg style="position:absolute;left:905px;top:75.5px;" width="17" height="18" viewBox="0 0 17 18"><rect x="4.5" y="5" width="8" height="8" fill="#e6e6e6"/><path d="M2.5 3h3M2.5 3v3M14.5 3h-3M14.5 3v3M2.5 15h3M2.5 15v-3M14.5 15h-3M14.5 15v-3" stroke="#e6e6e6" stroke-width="1"/></svg>
<svg style="position:absolute;left:925px;top:75.5px;" width="18" height="18" viewBox="0 0 18 18"><circle cx="9" cy="9" r="5.5" fill="none" stroke="#e6e6e6" stroke-width="1.5"/><rect x="6.5" y="6.5" width="5" height="5" fill="#e6e6e6"/></svg>
<svg style="position:absolute;left:950px;top:75.5px;" width="18" height="18" viewBox="0 0 18 18"><rect x="3.5" y="8" width="4" height="6" fill="#e6e6e6"/><rect x="10" y="8" width="4" height="6" fill="none" stroke="#e6e6e6" stroke-width="1"/><path d="M5.5 6.5c1-3 5-3 6 0" fill="none" stroke="#e6e6e6" stroke-width="1"/></svg>
<div style="position:absolute;left:791px;top:95px;width:233px;height:36px;background:#4a4745;border-bottom:1px solid #5a5856"></div>
<div style="position:absolute;left:875px;top:95px;width:2px;height:36px;background:#e02020"></div>
<div style="position:absolute;left:933px;top:95px;width:2px;height:36px;background:#e02020"></div>
<div style="position:absolute;left:885px;top:96px;width:45px;height:36px;background:#fff"></div>
<svg style="position:absolute;left:885px;top:96px;" width="45" height="36" viewBox="0 0 45 36"><g transform="scale(0.109,0.1068)">
<g transform="translate(-298,-114)">
<!-- leaves -->
<path d="M504 189 C497 169 472 164 472 178 C472 194 496 195 504 189Z" fill="#72e06c" stroke="#e8706a" stroke-width="3.4"/>
<path d="M505 190 C513 174 533 176 532 189 C531 200 512 196 505 190Z" fill="#72e06c" stroke="#e8706a" stroke-width="3.4"/>
<path d="M504.5 188 V201" stroke="#e8706a" stroke-width="3"/>
<!-- head shading crescent -->
<path d="M502 200 C465 200 431 230 431 275 C431 300 445 320 466 334 L465 374 L490 381 C482 362 474 346 470 334 C458 320 451 300 451.5 278 C453 240 478 211 502 200Z" fill="#f8a88f"/>
<path d="M545 326 L549 326 L551 369 C540 375 530 379 520 381 C532 372 540 370 546 366Z" fill="#f8a88f"/>
<!-- head outline -->
<path d="M477 336 C450 322 431 300 431 272 C431 232 463 200 502.5 200 C542 200 574 232 574 272 C574 300 556 322 526 337" fill="none" stroke="#e8706a" stroke-width="4.8" stroke-linecap="round"/>
<!-- body -->
<path d="M464.5 334 L463.5 371 C478 379 490 381.5 503 381.5 C520 381.5 535 377 550.5 369 L547.5 324" fill="none" stroke="#e8706a" stroke-width="3.8" stroke-linecap="round" stroke-linejoin="round"/>
<!-- cheeks -->
<circle cx="465" cy="255" r="16" fill="#e9675d"/>
<circle cx="538.5" cy="252.5" r="16" fill="#e9675d"/>
<circle cx="445.5" cy="279" r="18" fill="#f7cbc2" opacity="0.95"/>
<circle cx="556" cy="277" r="18" fill="#f7cbc2" opacity="0.95"/>
<path d="M436 279l5-6M441 283l5-6M447 285l3-5" stroke="#fff" stroke-width="1.8" stroke-linecap="round"/>
<path d="M553 278l-4-6M558 280l-4-6M564 282l-3-5" stroke="#fff" stroke-width="1.8" stroke-linecap="round"/>
<!-- mouth -->
<path d="M495 273 C489 276 490 283 496 282 C500 281 501 278 501.5 276 C502 278 503 281 507 282 C513 283 514 276 508 273" fill="none" stroke="#e8706a" stroke-width="2"/>
<!-- arms -->
<path d="M463 340.5 L449 339.5 M462 356 L445 355" stroke="#e8706a" stroke-width="3.2" stroke-linecap="round"/>
<g fill="none" stroke="#f2d21e" stroke-width="1.6">
<circle cx="433.5" cy="337.2" r="6.5"/><circle cx="447" cy="336" r="6.5"/><circle cx="436" cy="346" r="6"/><circle cx="447.6" cy="347" r="6.5"/><circle cx="440.8" cy="359.6" r="6.5"/>
<circle cx="571" cy="331.7" r="7"/><circle cx="577" cy="340.5" r="6.5"/><circle cx="561" cy="337.4" r="6.5"/><circle cx="570" cy="351" r="6.5"/><circle cx="561" cy="354" r="6.5"/>
</g>
<path d="M451 343 L441 348" stroke="#e8706a" stroke-width="2.6" stroke-linecap="round"/>
<path d="M555.5 337.4 C560 337 562 339 560 345 C565 347 567 350 557 356" fill="none" stroke="#e8706a" stroke-width="2.8" stroke-linecap="round"/>
</g><text x="43" y="58" font-size="19.5" fill="#555" font-family="Liberation Sans">@Kelvawa</text><text x="43" y="76" font-size="19.5" fill="#555" font-family="Liberation Sans">#Hoidap247</text></g></svg>
<div style="position:absolute;left:791px;top:136.5px;width:233px;height:1px;background:#6f8fb8"></div>
<div style="position:absolute;left:791px;top:137.5px;width:233px;height:15px;background:#393939"></div>
<div class="t" style="left:695.5px;width:400px;text-align:center;top:140.3px;font-size:8.6px;line-height:10.3px;color:#d4d4d4;transform:scaleX(0.93);transform-origin:center;">Brush Preview</div>
<svg style="position:absolute;left:1000px;top:140.5px;" width="8" height="8" viewBox="0 0 8 8"><path d="M5 .8H7.2V3M7.2 .8L4 4" stroke="#ddd" stroke-width="1" fill="none"/><path d="M3.5 1.5H.8V7.2H6.5V4.5" stroke="#ddd" stroke-width="1.1" fill="none"/></svg>
<svg style="position:absolute;left:1012px;top:140.5px;" width="8" height="8" viewBox="0 0 8 8"><path d="M1 1L7 7M7 1L1 7" stroke="#e6e6e6" stroke-width="1.8"/></svg>
<div style="position:absolute;left:790px;top:152px;width:234px;height:35px;background-color:#fff;background-image:linear-gradient(45deg,#e9e9e9 25%,transparent 25%,transparent 75%,#e9e9e9 75%),linear-gradient(45deg,#e9e9e9 25%,transparent 25%,transparent 75%,#e9e9e9 75%);background-size:8px 8px;background-position:0 0,4px 4px"></div>
<div style="position:absolute;left:790px;top:152px;width:36px;height:35px;background:#fff;border-right:1px solid #ccc"></div>
<div style="position:absolute;left:790px;top:152px;width:36px;height:35px;overflow:hidden"><div class="t" style="left:2.5px;top:1px;font-size:8px;color:#8ab0d8">*</div><div class="t" style="left:9.5px;top:1.6px;font-size:8.8px;line-height:10px;color:#7aa8d8">0.73mm</div></div>
<div style="position:absolute;left:806.5px;top:168.5px;width:3px;height:3px;background:#000;border-radius:50%"></div>
<svg style="position:absolute;left:826px;top:152px;" width="198" height="36" viewBox="0 0 198 36"><polygon points="11.6,17.5 14.4,16.7 17.4,16.2 20.4,15.6 23.5,15.0 26.6,14.5 29.8,13.9 33.0,13.4 36.2,12.9 39.5,12.5 42.7,12.0 45.9,11.7 49.1,11.3 52.3,11.0 55.4,10.8 58.5,10.6 61.5,10.3 64.4,10.1 67.2,10.0 69.9,9.9 72.6,9.9 75.8,10.0 79.1,10.2 82.3,10.5 85.5,10.9 88.7,11.4 92.0,12.0 95.3,12.7 98.6,13.4 102.0,14.1 105.5,15.0 109.0,15.8 112.6,16.7 116.3,17.6 120.1,18.5 124.0,19.5 128.0,20.4 132.2,21.3 136.5,22.2 141.0,23.0 145.6,23.9 148.5,24.2 151.3,24.5 154.0,24.7 156.6,24.8 159.2,24.8 161.6,24.8 164.0,24.7 166.2,24.5 168.4,24.3 170.5,24.0 172.6,23.7 174.5,23.4 176.3,23.1 178.1,22.5 179.7,21.8 181.3,21.2 182.7,20.6 184.1,19.9 185.4,19.2 186.7,18.6 186.5,18.0 185.1,17.9 183.7,17.8 182.1,17.8 180.5,17.8 178.9,17.9 177.2,18.0 175.4,18.0 173.6,18.3 171.8,18.6 169.9,18.9 167.9,19.1 165.8,19.3 163.7,19.5 161.4,19.6 159.1,19.6 156.8,19.6 154.3,19.5 151.7,19.3 149.1,19.1 146.4,18.7 141.9,17.9 137.5,17.1 133.3,16.2 129.2,15.3 125.2,14.4 121.3,13.5 117.5,12.6 113.8,11.6 110.2,10.8 106.7,9.9 103.2,9.1 99.7,8.3 96.3,7.6 93.0,6.9 89.6,6.3 86.2,5.8 82.9,5.4 79.5,5.0 76.1,4.8 72.6,4.7 69.9,4.7 67.0,4.8 64.1,4.9 61.1,5.1 58.0,5.4 54.9,5.9 51.7,6.4 48.5,7.0 45.3,7.6 42.1,8.3 38.8,9.1 35.6,9.8 32.4,10.6 29.3,11.5 26.1,12.4 23.1,13.3 20.0,14.2 17.1,15.1 14.2,16.1 11.4,16.9" fill="#111"/></svg>
<div style="position:absolute;left:790px;top:187px;width:234px;height:5px;background:#262626"></div>
<div style="position:absolute;left:791px;top:192px;width:233px;height:1px;background:#6f8fb8"></div>
<div style="position:absolute;left:791px;top:193px;width:233px;height:15px;background:#393939"></div>
<div class="t" style="left:695.5px;width:400px;text-align:center;top:195.8px;font-size:8.6px;line-height:10.3px;color:#d4d4d4;transform:scaleX(0.93);transform-origin:center;">Layer</div>
<svg style="position:absolute;left:1000px;top:196px;" width="8" height="8" viewBox="0 0 8 8"><path d="M5 .8H7.2V3M7.2 .8L4 4" stroke="#ddd" stroke-width="1" fill="none"/><path d="M3.5 1.5H.8V7.2H6.5V4.5" stroke="#ddd" stroke-width="1.1" fill="none"/></svg>
<svg style="position:absolute;left:1012px;top:196px;" width="8" height="8" viewBox="0 0 8 8"><path d="M1 1L7 7M7 1L1 7" stroke="#e6e6e6" stroke-width="1.8"/></svg>
<div class="t" style="left:794px;top:214.0px;font-size:8.3px;line-height:10.0px;color:#d0d0d0;">Opacity</div>
<div style="position:absolute;left:853.5px;top:212.5px;width:134.5px;height:11.5px;background:linear-gradient(to right,#78c0f0,#4a98dc)"></div>
<div class="t" style="left:993px;top:213.9px;font-size:8.5px;line-height:10.2px;color:#d8d8d8;">100 %</div>
<div class="t" style="left:794px;top:233.0px;font-size:8.4px;line-height:10.1px;color:#d0d0d0;">Blending</div>
<div style="position:absolute;left:855px;top:229px;width:164px;height:16px;background:#484848;border-radius:2px"></div>
<div class="t" style="left:857px;top:233.1px;font-size:8.6px;line-height:10.3px;color:#d8d8d8;transform:scaleX(0.9);transform-origin:left;">Normal</div>
<svg style="position:absolute;left:1008px;top:234px;" width="9" height="6" viewBox="0 0 9 6"><path d="M1.5 1.5h6L4.5 4.5z" fill="#c8c8c8"/></svg>
<div style="position:absolute;left:797px;top:253px;width:8.5px;height:8.5px;border:1px solid #c8c8c8"></div>
<div class="t" style="left:809px;top:253.3px;font-size:8.2px;line-height:9.8px;color:#d0d0d0;">Protect Alpha</div>
<div style="position:absolute;left:873px;top:253px;width:8.5px;height:8.5px;border:1px solid #c8c8c8"></div>
<div class="t" style="left:885px;top:253.3px;font-size:8.2px;line-height:9.8px;color:#d0d0d0;">Clipping</div>
<div style="position:absolute;left:949px;top:253px;width:8.5px;height:8.5px;border:1px solid #c8c8c8"></div>
<div class="t" style="left:961px;top:253.3px;font-size:8.2px;line-height:9.8px;color:#d0d0d0;">Lock</div>
<div style="position:absolute;left:792px;top:268px;width:215px;height:117px;background:#4a4745"></div>
<div style="position:absolute;left:792px;top:268px;width:215px;height:29.5px;background:#5c5a58;border-bottom:1px solid #3a3836"></div>
<svg style="position:absolute;left:795px;top:278px;" width="9" height="9" viewBox="0 0 9 9"><circle cx="4.5" cy="4.5" r="4" fill="#dcdcdc"/></svg>
<div class="t" style="left:856px;top:277.2px;font-size:9.6px;line-height:11.5px;color:#f0f0f0;">@Kelvawa</div>
<svg style="position:absolute;left:816px;top:276px;" width="30" height="12" viewBox="0 0 30 12"><path d="M2 6h25M3 3h4M9 3h5M16 3h4M22 3h5M3 9h22" stroke="#f0f0f0" stroke-width="1.2"/><rect x="23" y="2" width="4" height="4" fill="#fff"/></svg>
<div style="position:absolute;left:792px;top:298px;width:215px;height:29.5px;background:#5c5a58;border-bottom:1px solid #3a3836"></div>
<div style="position:absolute;left:806.5px;top:298px;width:200.5px;height:29.5px;background:#5097d2;border-bottom:1px solid #3a3836"></div>
<svg style="position:absolute;left:795px;top:308px;" width="9" height="9" viewBox="0 0 9 9"><circle cx="4.5" cy="4.5" r="4" fill="#dcdcdc"/></svg>
<div style="position:absolute;left:818px;top:302px;width:26px;height:21px;background-color:#fff;background-image:linear-gradient(45deg,#e4e4e4 25%,transparent 25%,transparent 75%,#e4e4e4 75%),linear-gradient(45deg,#e4e4e4 25%,transparent 25%,transparent 75%,#e4e4e4 75%);background-size:6px 6px;background-position:0 0,3px 3px"></div>
<div class="t" style="left:856px;top:307.2px;font-size:9.6px;line-height:11.5px;color:#f0f0f0;font-weight:bold">Layer5</div>
<svg style="position:absolute;left:988px;top:303px;" width="18" height="18" viewBox="0 0 18 18"><g fill="#fff"><circle cx="9" cy="9" r="5"/><path d="M7.8 1.5h2.4v15H7.8zM1.5 7.8h15v2.4h-15z"/><path d="M3.2 4.9l1.7-1.7 9.9 9.9-1.7 1.7zM13.1 3.2l1.7 1.7-9.9 9.9-1.7-1.7z"/></g><circle cx="9" cy="9" r="2" fill="#5097d2"/></svg>
<div style="position:absolute;left:792px;top:328px;width:215px;height:29.5px;background:#5c5a58;border-bottom:1px solid #3a3836"></div>
<svg style="position:absolute;left:795px;top:338px;" width="9" height="9" viewBox="0 0 9 9"><circle cx="4.5" cy="4.5" r="4" fill="#dcdcdc"/></svg>
<div style="position:absolute;left:818px;top:332px;width:26px;height:21px;background-color:#fff;background-image:linear-gradient(45deg,#e4e4e4 25%,transparent 25%,transparent 75%,#e4e4e4 75%),linear-gradient(45deg,#e4e4e4 25%,transparent 25%,transparent 75%,#e4e4e4 75%);background-size:6px 6px;background-position:0 0,3px 3px"></div>
<div class="t" style="left:856px;top:337.2px;font-size:9.6px;line-height:11.5px;color:#f0f0f0;">Layer4</div>
<svg style="position:absolute;left:818px;top:332px;" width="26" height="21" viewBox="0 0 26 21"><g transform="scale(0.063,0.0623)" opacity="0.55">
<g transform="translate(-298,-114)">
<!-- leaves -->
<path d="M504 189 C497 169 472 164 472 178 C472 194 496 195 504 189Z" fill="#72e06c" stroke="#e8706a" stroke-width="3.4"/>
<path d="M505 190 C513 174 533 176 532 189 C531 200 512 196 505 190Z" fill="#72e06c" stroke="#e8706a" stroke-width="3.4"/>
<path d="M504.5 188 V201" stroke="#e8706a" stroke-width="3"/>
<!-- head shading crescent -->
<path d="M502 200 C465 200 431 230 431 275 C431 300 445 320 466 334 L465 374 L490 381 C482 362 474 346 470 334 C458 320 451 300 451.5 278 C453 240 478 211 502 200Z" fill="#f8a88f"/>
<path d="M545 326 L549 326 L551 369 C540 375 530 379 520 381 C532 372 540 370 546 366Z" fill="#f8a88f"/>
<!-- head outline -->
<path d="M477 336 C450 322 431 300 431 272 C431 232 463 200 502.5 200 C542 200 574 232 574 272 C574 300 556 322 526 337" fill="none" stroke="#e8706a" stroke-width="4.8" stroke-linecap="round"/>
<!-- body -->
<path d="M464.5 334 L463.5 371 C478 379 490 381.5 503 381.5 C520 381.5 535 377 550.5 369 L547.5 324" fill="none" stroke="#e8706a" stroke-width="3.8" stroke-linecap="round" stroke-linejoin="round"/>
<!-- cheeks -->
<circle cx="465" cy="255" r="16" fill="#e9675d"/>
<circle cx="538.5" cy="252.5" r="16" fill="#e9675d"/>
<circle cx="445.5" cy="279" r="18" fill="#f7cbc2" opacity="0.95"/>
<circle cx="556" cy="277" r="18" fill="#f7cbc2" opacity="0.95"/>
<path d="M436 279l5-6M441 283l5-6M447 285l3-5" stroke="#fff" stroke-width="1.8" stroke-linecap="round"/>
<path d="M553 278l-4-6M558 280l-4-6M564 282l-3-5" stroke="#fff" stroke-width="1.8" stroke-linecap="round"/>
<!-- mouth -->
<path d="M495 273 C489 276 490 283 496 282 C500 281 501 278 501.5 276 C502 278 503 281 507 282 C513 283 514 276 508 273" fill="none" stroke="#e8706a" stroke-width="2"/>
<!-- arms -->
<path d="M463 340.5 L449 339.5 M462 356 L445 355" stroke="#e8706a" stroke-width="3.2" stroke-linecap="round"/>
<g fill="none" stroke="#f2d21e" stroke-width="1.6">
<circle cx="433.5" cy="337.2" r="6.5"/><circle cx="447" cy="336" r="6.5"/><circle cx="436" cy="346" r="6"/><circle cx="447.6" cy="347" r="6.5"/><circle cx="440.8" cy="359.6" r="6.5"/>
<circle cx="571" cy="331.7" r="7"/><circle cx="577" cy="340.5" r="6.5"/><circle cx="561" cy="337.4" r="6.5"/><circle cx="570" cy="351" r="6.5"/><circle cx="561" cy="354" r="6.5"/>
</g>
<path d="M451 343 L441 348" stroke="#e8706a" stroke-width="2.6" stroke-linecap="round"/>
<path d="M555.5 337.4 C560 337 562 339 560 345 C565 347 567 350 557 356" fill="none" stroke="#e8706a" stroke-width="2.8" stroke-linecap="round"/>
</g></g></svg>
<div style="position:absolute;left:1007px;top:268px;width:17px;height:117px;background:#262626"></div>
<svg style="position:absolute;left:1008px;top:268px;" width="15" height="117" viewBox="0 0 15 117"><path d="M3.5 8L7.5 3.5 11.5 8z" fill="#c8c8c8"/><rect x="1" y="9" width="13" height="95" rx="4" fill="#6c6c6c"/><path d="M3.5 107L7.5 111.5 11.5 107z" fill="#c8c8c8"/></svg>
<div style="position:absolute;left:791px;top:385px;width:233px;height:23px;background:#262626"></div>
<div class="btn" style="left:794.5px;top:387.5px;width:17.5px;height:17px;"></div>
<div class="btn" style="left:815px;top:387.5px;width:17.5px;height:17px;"></div>
<div class="btn" style="left:835px;top:387.5px;width:17.5px;height:17px;"></div>
<div class="btn" style="left:855.5px;top:387.5px;width:22px;height:17px;"></div>
<div class="btn" style="left:881px;top:387.5px;width:17.5px;height:17px;"></div>
<div class="btn" style="left:906.5px;top:387.5px;width:17.5px;height:17px;"></div>
<div class="btn" style="left:926px;top:387.5px;width:17.5px;height:17px;"></div>
<div class="btn" style="left:952px;top:387.5px;width:17.5px;height:17px;"></div>
<div style="position:absolute;left:901.5px;top:391px;width:1px;height:10px;background:#555"></div>
<div style="position:absolute;left:948px;top:391px;width:1px;height:10px;background:#555"></div>
<svg style="position:absolute;left:794.5px;top:387.5px;" width="17.5" height="17" viewBox="0 0 17.5 17"><path d="M5 3.5h5l2.5 2.5v7.5H5z" fill="none" stroke="#e6e6e6" stroke-width="1.1"/></svg>
<svg style="position:absolute;left:815px;top:387.5px;" width="17.5" height="17" viewBox="0 0 17.5 17"><path d="M5 3.5h5l2.5 2.5v7.5H5z" fill="none" stroke="#e6e6e6" stroke-width="1.1"/><text x="8.8" y="12.5" font-size="6.5" fill="#e6e6e6" text-anchor="middle" font-family="Liberation Sans">a</text></svg>
<svg style="position:absolute;left:835px;top:387.5px;" width="17.5" height="17" viewBox="0 0 17.5 17"><path d="M5 3.5h5l2.5 2.5v7.5H5z" fill="none" stroke="#e6e6e6" stroke-width="1.1"/><path d="M8.7 12.5V7.5M7 9l1.7-1.7L10.4 9" stroke="#e6e6e6" stroke-width="1" fill="none"/></svg>
<svg style="position:absolute;left:855.5px;top:387.5px;" width="22" height="17" viewBox="0 0 22 17"><path d="M4 3.5h5l2 2v8H4z" fill="none" stroke="#e6e6e6" stroke-width="1.1"/><path d="M8.5 11h5M11 8.5v5" stroke="#e6e6e6" stroke-width="1.3"/><path d="M15 8h5l-2.5 3z" fill="#e6e6e6"/></svg>
<svg style="position:absolute;left:881px;top:387.5px;" width="17.5" height="17" viewBox="0 0 17.5 17"><path d="M3.5 5h4l1 1.5h5.5v7h-10.5z" fill="#e6e6e6"/></svg>
<svg style="position:absolute;left:906.5px;top:387.5px;" width="17.5" height="17" viewBox="0 0 17.5 17"><rect x="4" y="6.5" width="7" height="7" fill="none" stroke="#e6e6e6" stroke-width="1.1"/><path d="M6.5 6.5V4h7v7H11" fill="none" stroke="#e6e6e6" stroke-width="1.1"/></svg>
<svg style="position:absolute;left:926px;top:387.5px;" width="17.5" height="17" viewBox="0 0 17.5 17"><path d="M4 4h4v9H4zM8 8.5h2" stroke="#e6e6e6" stroke-width="1.1" fill="none"/><rect x="10" y="6.5" width="4.5" height="4" fill="#e6e6e6"/></svg>
<svg style="position:absolute;left:952px;top:387.5px;" width="17.5" height="17" viewBox="0 0 17.5 17"><path d="M4.5 5h9M7.5 5V3.5h3V5M5.5 6v8h7V6" fill="none" stroke="#e6e6e6" stroke-width="1.2"/><path d="M7.5 7v6M9 7v6M10.5 7v6" stroke="#e6e6e6" stroke-width="1"/></svg>
<div style="position:absolute;left:790px;top:428px;width:218px;height:103px;background:#4a4745"></div>
<div style="position:absolute;left:790.5px;top:428px;width:29px;height:28px;background:#5c5a58"></div>
<div style="position:absolute;left:801.0px;top:429.5px;width:8px;height:8px;border-radius:50%;background:#ececec"></div>
<div class="t" style="left:605px;width:400px;text-align:center;top:446.5px;font-size:7.5px;line-height:9.0px;color:#f0f0f0;">10</div>
<div style="position:absolute;left:820.5px;top:428px;width:29px;height:28px;background:#5c5a58"></div>
<div style="position:absolute;left:830.5px;top:429.0px;width:9.0px;height:9.0px;border-radius:50%;background:#ececec"></div>
<div class="t" style="left:635px;width:400px;text-align:center;top:446.5px;font-size:7.5px;line-height:9.0px;color:#f0f0f0;">12</div>
<div style="position:absolute;left:850.5px;top:428px;width:29px;height:28px;background:#5c5a58"></div>
<div style="position:absolute;left:859.5px;top:428.0px;width:11.0px;height:11.0px;border-radius:50%;background:#ececec"></div>
<div class="t" style="left:665px;width:400px;text-align:center;top:446.5px;font-size:7.5px;line-height:9.0px;color:#f0f0f0;">15</div>
<div style="position:absolute;left:880.5px;top:428px;width:29px;height:28px;background:#5c5a58"></div>
<div style="position:absolute;left:887.5px;top:426.0px;width:15.0px;height:15.0px;border-radius:50%;background:#ececec"></div>
<div class="t" style="left:695px;width:400px;text-align:center;top:446.5px;font-size:7.5px;line-height:9.0px;color:#f0f0f0;">20</div>
<div style="position:absolute;left:910.5px;top:428px;width:29px;height:28px;background:#5c5a58"></div>
<div style="position:absolute;left:916.0px;top:424.5px;width:18px;height:18px;border-radius:50%;background:#ececec"></div>
<div class="t" style="left:725px;width:400px;text-align:center;top:446.5px;font-size:7.5px;line-height:9.0px;color:#f0f0f0;">25</div>
<div style="position:absolute;left:940.5px;top:428px;width:29px;height:28px;background:#5c5a58"></div>
<div style="position:absolute;left:946.0px;top:424.5px;width:18px;height:18px;border-radius:50%;background:#ececec"></div>
<div class="t" style="left:755px;width:400px;text-align:center;top:446.5px;font-size:7.5px;line-height:9.0px;color:#f0f0f0;">30</div>
<div style="position:absolute;left:970.5px;top:428px;width:29px;height:28px;background:#5c5a58"></div>
<div style="position:absolute;left:976.0px;top:424.5px;width:18px;height:18px;border-radius:50%;background:#ececec"></div>
<div class="t" style="left:785px;width:400px;text-align:center;top:446.5px;font-size:7.5px;line-height:9.0px;color:#f0f0f0;">40</div>
<div style="position:absolute;left:790.5px;top:457px;width:29px;height:36px;background:#5c5a58"></div>
<div style="position:absolute;left:796.0px;top:461.8px;width:18px;height:18px;border-radius:50%;background:#ececec"></div>
<div class="t" style="left:605px;width:400px;text-align:center;top:483.5px;font-size:7.5px;line-height:9.0px;color:#f0f0f0;">50</div>
<div style="position:absolute;left:820.5px;top:457px;width:29px;height:36px;background:#5c5a58"></div>
<div style="position:absolute;left:826.0px;top:461.8px;width:18px;height:18px;border-radius:50%;background:#ececec"></div>
<div class="t" style="left:635px;width:400px;text-align:center;top:483.5px;font-size:7.5px;line-height:9.0px;color:#f0f0f0;">70</div>
<div style="position:absolute;left:850.5px;top:457px;width:29px;height:36px;background:#5c5a58"></div>
<div style="position:absolute;left:856.0px;top:461.8px;width:18px;height:18px;border-radius:50%;background:#ececec"></div>
<div class="t" style="left:665px;width:400px;text-align:center;top:483.5px;font-size:7.5px;line-height:9.0px;color:#f0f0f0;">100</div>
<div style="position:absolute;left:880.5px;top:457px;width:29px;height:36px;background:#5c5a58"></div>
<div style="position:absolute;left:886.0px;top:461.8px;width:18px;height:18px;border-radius:50%;background:#ececec"></div>
<div class="t" style="left:695px;width:400px;text-align:center;top:483.5px;font-size:7.5px;line-height:9.0px;color:#f0f0f0;">150</div>
<div style="position:absolute;left:910.5px;top:457px;width:29px;height:36px;background:#5c5a58"></div>
<div style="position:absolute;left:916.0px;top:461.8px;width:18px;height:18px;border-radius:50%;background:#ececec"></div>
<div class="t" style="left:725px;width:400px;text-align:center;top:483.5px;font-size:7.5px;line-height:9.0px;color:#f0f0f0;">200</div>
<div style="position:absolute;left:940.5px;top:457px;width:29px;height:36px;background:#5c5a58"></div>
<div style="position:absolute;left:946.0px;top:461.8px;width:18px;height:18px;border-radius:50%;background:#ececec"></div>
<div class="t" style="left:755px;width:400px;text-align:center;top:483.5px;font-size:7.5px;line-height:9.0px;color:#f0f0f0;">300</div>
<div style="position:absolute;left:970.5px;top:457px;width:29px;height:36px;background:#5c5a58"></div>
<div style="position:absolute;left:976.0px;top:461.8px;width:18px;height:18px;border-radius:50%;background:#ececec"></div>
<div class="t" style="left:785px;width:400px;text-align:center;top:483.5px;font-size:7.5px;line-height:9.0px;color:#f0f0f0;">400</div>
<div style="position:absolute;left:790.5px;top:494px;width:29px;height:37px;background:#5c5a58"></div>
<div style="position:absolute;left:796.0px;top:499.0px;width:18px;height:18px;border-radius:50%;background:#ececec"></div>
<div class="t" style="left:605px;width:400px;text-align:center;top:521.5px;font-size:7.5px;line-height:9.0px;color:#f0f0f0;">500</div>
<div style="position:absolute;left:820.5px;top:494px;width:29px;height:37px;background:#5c5a58"></div>
<div style="position:absolute;left:826.0px;top:499.0px;width:18px;height:18px;border-radius:50%;background:#ececec"></div>
<div class="t" style="left:635px;width:400px;text-align:center;top:521.5px;font-size:7.5px;line-height:9.0px;color:#f0f0f0;">700</div>
<div style="position:absolute;left:850.5px;top:494px;width:29px;height:37px;background:#5c5a58"></div>
<div style="position:absolute;left:856.0px;top:499.0px;width:18px;height:18px;border-radius:50%;background:#ececec"></div>
<div class="t" style="left:665px;width:400px;text-align:center;top:521.5px;font-size:7.5px;line-height:9.0px;color:#f0f0f0;">1000</div>
<div style="position:absolute;left:790px;top:408px;width:234px;height:5px;background:#262626"></div>
<div style="position:absolute;left:791px;top:412.5px;width:233px;height:1px;background:#6f8fb8"></div>
<div style="position:absolute;left:791px;top:413.5px;width:233px;height:15px;background:#393939"></div>
<div class="t" style="left:695.5px;width:400px;text-align:center;top:416.3px;font-size:8.6px;line-height:10.3px;color:#d4d4d4;transform:scaleX(0.93);transform-origin:center;">Brush Size</div>
<svg style="position:absolute;left:1000px;top:416.5px;" width="8" height="8" viewBox="0 0 8 8"><path d="M5 .8H7.2V3M7.2 .8L4 4" stroke="#ddd" stroke-width="1" fill="none"/><path d="M3.5 1.5H.8V7.2H6.5V4.5" stroke="#ddd" stroke-width="1.1" fill="none"/></svg>
<svg style="position:absolute;left:1012px;top:416.5px;" width="8" height="8" viewBox="0 0 8 8"><path d="M1 1L7 7M7 1L1 7" stroke="#e6e6e6" stroke-width="1.8"/></svg>
<div style="position:absolute;left:1008px;top:428px;width:16px;height:103px;background:#262626"></div>
<svg style="position:absolute;left:1008px;top:428px;" width="15" height="103" viewBox="0 0 15 103"><path d="M3.5 9L7.5 4.5 11.5 9z" fill="#c8c8c8"/><rect x="1" y="32" width="13" height="57" rx="4" fill="#6c6c6c"/><path d="M3.5 93L7.5 97.5 11.5 93z" fill="#c8c8c8"/></svg>
<div class="t" style="left:805px;top:488.2px;font-size:14.6px;line-height:17.5px;color:rgba(200,200,200,0.42);">Activate Windows</div>
<div class="t" style="left:805px;top:506.8px;font-size:11.2px;line-height:13.4px;color:rgba(200,200,200,0.42);">Go to Settings to activate Windows.</div>
<div style="position:absolute;left:0px;top:530px;width:1024px;height:16px;background:#262626"></div>
<div class="t" style="left:6px;top:533.4px;font-size:9.7px;line-height:11.6px;color:#d2d2d2;transform:scaleX(0.87);transform-origin:left;">1100 * 899 pixel</div>
<div class="t" style="left:72px;top:533.4px;font-size:9.7px;line-height:11.6px;color:#d2d2d2;transform:scaleX(0.87);transform-origin:left;">(8 * 6.5cm)</div>
<div class="t" style="left:121px;top:533.4px;font-size:9.7px;line-height:11.6px;color:#d2d2d2;transform:scaleX(0.87);transform-origin:left;">350 dpi</div>
<div class="t" style="left:157px;top:533.4px;font-size:9.7px;line-height:11.6px;color:#d2d2d2;transform:scaleX(0.87);transform-origin:left;">50 %</div>
<div class="t" style="left:182px;top:533.4px;font-size:9.7px;line-height:11.6px;color:#d2d2d2;transform:scaleX(0.87);transform-origin:left;">( 1212, 566 )</div>
<div style="position:absolute;left:0px;top:546px;width:1024px;height:30px;background:linear-gradient(to right,#463a30,#4a3c32 60%,#47403a);border-top:1px solid #54493f"></div>
<div style="position:absolute;left:1020px;top:547px;width:1px;height:29px;background:#6a6560"></div>
<svg style="position:absolute;left:12px;top:555px;" width="13" height="13" viewBox="0 0 13 13"><path d="M0 1.8L5.5 1V6H0zM6.5 .9L13 0V6H6.5zM0 7h5.5v5L0 11.2zM6.5 7H13v6l-6.5-.9z" fill="#fff"/></svg>
<div style="position:absolute;left:36px;top:546px;width:258px;height:30px;background:#f1f1f1"></div>
<svg style="position:absolute;left:44px;top:553px;" width="15" height="15" viewBox="0 0 15 15"><circle cx="9" cy="6" r="4.5" fill="none" stroke="#222" stroke-width="1.3"/><path d="M5.8 9.2L1.5 13.5" stroke="#222" stroke-width="1.5"/></svg>
<div class="t" style="left:66px;top:554.9px;font-size:11px;line-height:13.2px;color:#333;">Type here to search</div>
<svg style="position:absolute;left:305px;top:554px;" width="14" height="13" viewBox="0 0 14 13"><path d="M1 1h2M1 12h2M11 1h2M11 12h2M3 3h8v7H3z" stroke="#fff" stroke-width="1.2" fill="none"/><path d="M13 3v7" stroke="#fff" stroke-width="1.5"/></svg>
<div style="position:absolute;left:332px;top:546px;width:36px;height:30px;background:#5c514b"></div>
<div style="position:absolute;left:332px;top:574px;width:36px;height:2px;background:#7fb6e8"></div>
<svg style="position:absolute;left:341px;top:552px;" width="18" height="18" viewBox="0 0 18 18"><rect x="0" y="0" width="18" height="18" rx="3.5" fill="#f4f2f0"/><circle cx="9" cy="9.5" r="5.8" fill="#1fb29a"/><path d="M9 9.5 L3.4 8 A5.8 5.8 0 0 1 10 3.8Z" fill="#e84040"/><path d="M9 9.5 L10 3.8 A5.8 5.8 0 0 1 13.5 5.8Z" fill="#f2c030"/><path d="M9 9.5 L3.4 8 A5.8 5.8 0 0 0 6 14.5Z" fill="#36c060"/><path d="M9 9.5 L14.7 9.5 A5.8 5.8 0 0 1 9 15.3Z" fill="#1a8ad0"/></svg>
<svg style="position:absolute;left:378px;top:554px;" width="17" height="14" viewBox="0 0 17 14"><path d="M0 2h6l1.5 1.5H17V14H0z" fill="#f0c040"/><rect x="0" y="5" width="17" height="9" fill="#f8d050"/><rect x="5" y="9" width="7" height="5" fill="#3a88d8"/></svg>
<svg style="position:absolute;left:414px;top:552px;" width="17" height="17" viewBox="0 0 17 17"><rect x="1" y="1" width="15" height="15" fill="#fff"/><path d="M12 3h3M12 6h3M12 9h3M12 12h3" stroke="#8aa8d8" stroke-width="1"/><text x="6.5" y="12.5" font-size="11" font-weight="bold" fill="#1d4fa8" text-anchor="middle" font-family="Liberation Sans">W</text></svg>
<div style="position:absolute;left:408px;top:574px;width:30px;height:2px;background:#7fb6e8"></div>
<svg style="position:absolute;left:451px;top:551px;" width="18" height="18" viewBox="0 0 18 18"><rect x="0" y="0" width="18" height="18" rx="5" fill="#3a8cf0"/><rect x="3.5" y="6" width="7.5" height="6.5" rx="1.2" fill="#fff"/><path d="M11.5 8.2l3-2v6.3l-3-2z" fill="#fff"/></svg>
<svg style="position:absolute;left:487px;top:551px;" width="19" height="19" viewBox="0 0 19 19"><rect x="0.5" y="1.5" width="17" height="16" rx="5" fill="#1f5fd8"/><rect x="1.5" y="0.5" width="17" height="15.5" rx="5" fill="#fff"/><text x="10" y="10.8" font-size="6" fill="#2a78e8" text-anchor="middle" font-family="Liberation Sans" font-weight="bold">Zalo</text></svg>
<div style="position:absolute;left:482px;top:574px;width:30px;height:2px;background:#7fb6e8"></div>
<svg style="position:absolute;left:524px;top:551px;" width="19" height="19" viewBox="0 0 19 19"><circle cx="9.5" cy="9.5" r="9" fill="#db4437"/><path d="M9.5 9.5L1.7 5A9 9 0 0 0 9.5 18.5z" fill="#0f9d58"/><path d="M9.5 9.5L17.3 5A9 9 0 0 1 9.5 18.5z" fill="#f4b400"/><path d="M9.5 9.5L1.7 5A9 9 0 0 1 17.3 5z" fill="#db4437"/><circle cx="9.5" cy="9.5" r="4.2" fill="#fff"/><circle cx="9.5" cy="9.5" r="3.3" fill="#4285f4"/></svg>
<svg style="position:absolute;left:561px;top:551px;" width="19" height="19" viewBox="0 0 19 19"><circle cx="9.5" cy="9.5" r="9" fill="#db4437"/><path d="M9.5 9.5L1.7 5A9 9 0 0 0 9.5 18.5z" fill="#0f9d58"/><path d="M9.5 9.5L17.3 5A9 9 0 0 1 9.5 18.5z" fill="#f4b400"/><path d="M9.5 9.5L1.7 5A9 9 0 0 1 17.3 5z" fill="#db4437"/><circle cx="9.5" cy="9.5" r="4.2" fill="#fff"/><circle cx="9.5" cy="9.5" r="3.3" fill="#4285f4"/><circle cx="14" cy="14" r="5" fill="#d8b8b0"/><path d="M12 11l4 2-3 3z" fill="#111"/></svg>
<div style="position:absolute;left:556px;top:574px;width:32px;height:2px;background:#7fb6e8"></div>
<svg style="position:absolute;left:598px;top:551px;" width="19" height="19" viewBox="0 0 19 19"><circle cx="9.5" cy="9.5" r="9" fill="#db4437"/><path d="M9.5 9.5L1.7 5A9 9 0 0 0 9.5 18.5z" fill="#0f9d58"/><path d="M9.5 9.5L17.3 5A9 9 0 0 1 9.5 18.5z" fill="#f4b400"/><path d="M9.5 9.5L1.7 5A9 9 0 0 1 17.3 5z" fill="#db4437"/><circle cx="9.5" cy="9.5" r="4.2" fill="#fff"/><circle cx="9.5" cy="9.5" r="3.3" fill="#4285f4"/><circle cx="14" cy="14" r="5" fill="#b8a8a0"/></svg>
<div style="position:absolute;left:593px;top:574px;width:30px;height:2px;background:#7fb6e8"></div>
<svg style="position:absolute;left:745px;top:554px;" width="19" height="14" viewBox="0 0 19 14"><path d="M4 13h11a4 4 0 0 0 0-8 5 5 0 0 0-9.5-1A4.5 4.5 0 0 0 4 13z" fill="#cfe4f4"/></svg>
<div class="t" style="left:770px;top:555.1px;font-size:10.6px;line-height:12.7px;color:#f0f0f0;">57°F&nbsp;&nbsp;Cloudy</div>
<svg style="position:absolute;left:842px;top:557px;" width="9" height="6" viewBox="0 0 9 6"><path d="M.8 5.2L4.5 1.2 8.2 5.2" stroke="#fff" stroke-width="1.1" fill="none"/></svg>
<svg style="position:absolute;left:858px;top:555px;" width="12" height="12" viewBox="0 0 12 12"><path d="M1 4h2.5L6.5 1v10L3.5 8H1z" fill="none" stroke="#fff" stroke-width="1"/><path d="M8.5 4c1 1 1 3 0 4M10 2.5c2 2 2 5 0 7" stroke="#fff" stroke-width="1" fill="none"/></svg>
<svg style="position:absolute;left:876px;top:555px;" width="13" height="11" viewBox="0 0 13 11"><rect x="3" y="4.5" width="9" height="5" fill="none" stroke="#fff" stroke-width="1"/><path d="M1 1h4v3H1z" fill="none" stroke="#fff" stroke-width="1"/></svg>
<svg style="position:absolute;left:896px;top:555px;" width="12" height="12" viewBox="0 0 12 12"><path d="M1 11A10 10 0 0 1 11 1M3.5 11A7.5 7.5 0 0 1 11 3.5M6 11A5 5 0 0 1 11 6" stroke="#fff" stroke-width="1" fill="none"/><circle cx="10" cy="10" r="1.3" fill="#fff"/></svg>
<div class="t" style="left:914px;top:556.3px;font-size:8.6px;line-height:10.3px;color:#f0f0f0;">ENG</div>
<div class="t" style="left:761px;width:400px;text-align:center;top:548.3px;font-size:8.6px;line-height:10.3px;color:#f0f0f0;">3:19 PM</div>
<div class="t" style="left:761px;width:400px;text-align:center;top:562.6px;font-size:9px;line-height:10.8px;color:#f0f0f0;">9/2/2022</div>
<svg style="position:absolute;left:992px;top:554px;" width="15" height="14" viewBox="0 0 15 14"><path d="M1 1h13v9H8l-2 3V10H1z" fill="none" stroke="#fff" stroke-width="1.1"/></svg>
</body></html>
